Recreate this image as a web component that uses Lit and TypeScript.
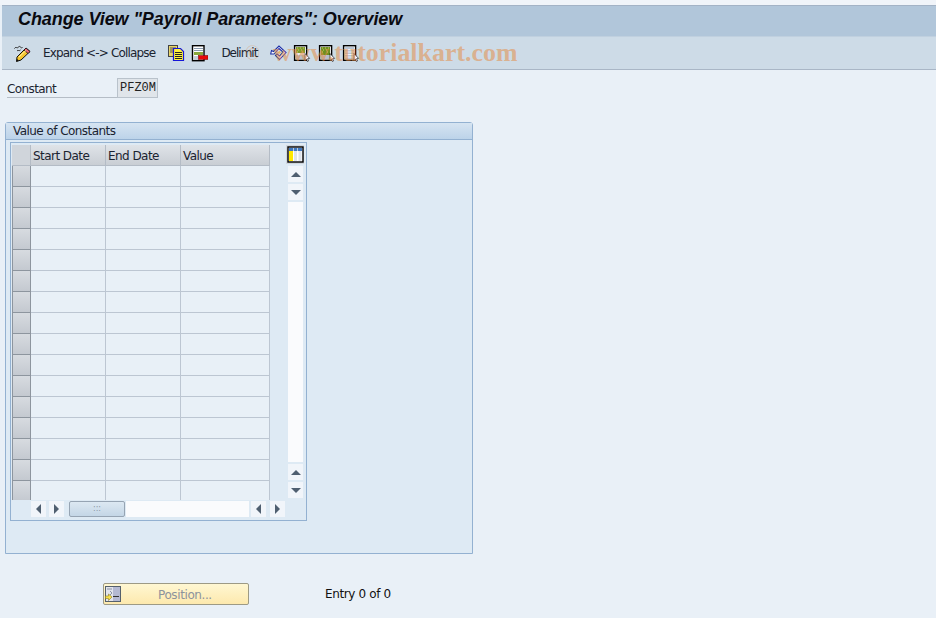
import { LitElement, html, css, svg } from "lit";
import { customElement } from "lit/decorators.js";

const rows = Array.from({ length: 16 }, (_, i) => i);

const pencil = svg`<svg width="17" height="17" viewBox="0 0 17 17"><path d="M0.500 3.500 C2 1 3 4 4.500 2 S7 4 8.500 2.500 M3 6 C4 4.500 5 6.500 6.500 5" stroke="#222" fill="none" stroke-width="1"/><path d="M3 12 L12 3 L16 6.500 L7 15 L2.500 16.500 Z" fill="#f6c52e" stroke="#111"/><path d="M12 3 L16 6.500 L14 8.500 L10 5 Z" fill="#ec6a78" stroke="#111" stroke-width=".8"/><path d="M5 12 L12 5.500" stroke="#fff2a8"/><path d="M2.500 16.500 L3 14 L5 15.500 Z" fill="#111"/></svg>`;
const copyIc = svg`<svg width="17" height="17" viewBox="0 0 17 17"><rect x="0.500" y="0.500" width="9" height="11" fill="#e8d46a" stroke="#444"/><path d="M2 3h6M2 5h6M2 7h6" stroke="#555"/><path d="M5.500 3.500 h7 l3 3 v9 h-10 Z" fill="#fff23a" stroke="#1616d8" stroke-width="1.200"/><path d="M7 7.500h7M7 9.500h7M7 11.500h7M7 13.500h7" stroke="#222"/></svg>`;
const delim = svg`<svg width="17" height="17" viewBox="0 0 17 17"><rect x="1.500" y="0.700" width="11.500" height="15" fill="#fff" stroke="#000" stroke-width="1.400"/><path d="M3 3.500h9M3 5.500h9" stroke="#8a9bb0"/><rect x="3" y="7" width="9" height="3" fill="#8aa83c"/><path d="M3 12h5M3 14h5" stroke="#8a9bb0"/><rect x="7.500" y="10.500" width="9.500" height="4" fill="#e80808" stroke="#700" stroke-width=".5"/></svg>`;
const diamond = svg`<svg width="17" height="17" viewBox="0 0 17 17"><path d="M0.700 9 L4 9 L9 3.500 L13 7 L9.500 11 L7 9 L5.500 10.500 L9.500 14.500 L16 7.500 L9 1 L3.500 6.500 L1.500 5.500 Z" fill="#fff" stroke="#1c2ea8" stroke-width="1.100"/><path d="M7.500 7.500 L9.500 5.800 L11 7.200 L9.500 9 Z" fill="#e9b866"/></svg>`;
const sel = (a: string, b: string, lines: boolean) => svg`<svg width="18" height="17" viewBox="0 0 18 17"><rect x="1.600" y="0.700" width="12" height="14.600" fill="#fff" stroke="#000" stroke-width="1.400"/>${
  lines
    ? svg`<rect x="3" y="2" width="9" height="12" fill="#b9c6d6"/><path d="M3 4.500h9M3 7h9M3 9.500h9M3 12h9" stroke="#eef1f5"/>`
    : svg`<rect x="3" y="2" width="9" height="6" fill="${a}"/><rect x="3" y="8" width="9" height="2" fill="${b}"/><path d="M3 11h9M3 13h9" stroke="#6f8198"/><path d="M4 3h1M7 3h1M10 3h1M5 5h1M8 5h1M4 7h1M9 7h1" stroke="#c3cf70"/>`
}<path d="M12 8.500 L12 15.500 L13.400 14.300 L14.400 16.500 L15.500 16 L14.600 13.700 L16.600 13.400 Z" fill="#fff" stroke="#000" stroke-width=".6"/></svg>`;
const layout = svg`<svg width="18" height="17" viewBox="0 0 18 17"><rect x="2" y="1" width="15" height="15" fill="#fff" stroke="#000" stroke-width="1.400"/><rect x="3" y="2" width="13" height="3" fill="#3f78c0"/><path d="M7.500 2v3M11.500 2v3" stroke="#bcd"/><rect x="3" y="5" width="4" height="10" fill="#ffe800"/><rect x="8" y="5" width="3" height="10" fill="#dfe3ea"/><rect x="12.500" y="5" width="3" height="10" fill="#dfe3ea"/></svg>`;
const posIc = svg`<svg width="16" height="16" viewBox="0 0 16 16"><rect x=".5" y=".5" width="15" height="15" fill="#e2e4ec" stroke="#55606c"/><rect x="8" y="1" width="7" height="14" fill="#b4b9d2"/><path d="M8 10.500h6" stroke="#333"/><path d="M2 3h5M5 5l2 2-2 2" stroke="#8a94a4" fill="none"/><path d="M0.500 10h3V8l3.500 3-3.500 3.500V12.500H0.500Z" fill="#f7e04a" stroke="#8c7a20" stroke-width=".6"/></svg>`;

@customElement("app-root")
export class AppRoot extends LitElement {
  static styles = css`
    :host { display: block; width: 936px; height: 618px; overflow: hidden; background: #e9f0f7; font-family: "DejaVu Sans", "Noto Sans", sans-serif; font-size: 12px; color: #1c2430; }
    .page { display: flex; flex-direction: column; height: 618px; }
    .strip { height: 5px; background: #f0f4f9; flex: none; }
    .title { flex: none; height: 30px; margin-left: 2px; border-top: 1px solid #a3b3c6; background: #b1c6da; display: flex; align-items: flex-start; padding-left: 16px; border-bottom: 1px solid #c0d0df; }
    .title span { font: italic bold 18px/26px "Liberation Sans", Arial, sans-serif; letter-spacing: -0.08px; color: #0a0a10; }
    .toolbar { flex: none; height: 32px; margin-left: 2px; background: #cddbe7; border-bottom: 1px solid #a9b6c6; position: relative; display: flex; align-items: center; padding-left: 12px; }
    .toolbar svg { flex: none; display: block; }
    .tb-text { white-space: pre; font: 12px "DejaVu Sans", sans-serif; color: #1a2330; }
    .expand { margin-left: 12px; letter-spacing: -0.82px; }
    .delimit { margin-left: 13px; letter-spacing: -1px; }
    .i2 { margin-left: 13px; }
    .i3 { margin-left: 6px; }
    .i5 { margin-left: 13px; }
    .i6 { margin-left: 6px; }
    .i7 { margin-left: 7px; }
    .i8 { margin-left: 6px; }
    .wm { position: absolute; left: 271px; top: 0; font: bold 25.9px/32px "Liberation Serif", serif; color: rgba(228, 140, 70, .55); white-space: nowrap; pointer-events: none; }
    .copy { position: absolute; left: 243px; top: 0; font: 20px/32px "Liberation Serif", serif; color: rgba(228, 140, 70, .35); pointer-events: none; }
    .const { flex: none; height: 20px; margin: 8px 0 0 7px; display: flex; align-items: flex-start; }
    .const label { width: 110px; height: 19px; border-bottom: 1px solid #b5bdc6; font: 12px/22px "DejaVu Sans", sans-serif; letter-spacing: -0.6px; }
    .const .val { width: 39px; height: 18px; background: #e0e5ea; border: 1px solid #b9c2cb; font: 12px/19px "Liberation Mono", monospace; color: #222; padding-left: 1px; box-sizing: content-box; width: 38px; text-align: center; }
    .group { flex: none; margin: 24px 0 0 5px; width: 468px; height: 432px; box-sizing: border-box; border: 1px solid #93b1d1; border-radius: 3px 3px 0 0; background: #deeaf4; }
    .ghead { height: 16px; background: linear-gradient(#d6e4f1, #bcd3e9); border-bottom: 1px solid #93b1d1; padding-left: 7px; font: 12px/16px "DejaVu Sans", sans-serif; letter-spacing: -0.55px; color: #1a2330; }
    .tc { margin: 2px 0 0 4px; width: 297px; height: 379px; box-sizing: border-box; border: 1px solid #93b1d1; background: #deeaf4; padding: 2px 0 0 1px; display: grid; grid-template-columns: 276px 18px; grid-template-rows: 355px 20px; }
    .tbl { display: grid; grid-template-columns: 19px 75px 75px 89px; grid-template-rows: repeat(17, 21px); height: 355px; overflow: hidden; align-content: start; }
    .hcell { background: linear-gradient(#dfe3e8, #c9ced4); border-right: 1px solid #b4bcc6; border-bottom: 1px solid #b4bcc6; font: 12px/22px "DejaVu Sans", sans-serif; letter-spacing: -0.55px; padding-left: 2px; box-sizing: border-box; color: #1a2330; }
    .hcell.corner { padding: 0; background: #d0d5db; }
    .rs { background: linear-gradient(#d7dbe0, #c4c9d0); border: 1px solid #8d959e; border-width: 0 1px 1px 1px; box-sizing: border-box; }
    .cell { background: #e8f0f7; border-right: 1px solid #bcc6d2; border-bottom: 1px solid #bcc6d2; box-sizing: border-box; }
    .side { display: flex; flex-direction: column; align-items: flex-start; height: 353px; }
    .lay { width: 18px; height: 19px; margin-left: -2px; display: flex; align-items: center; justify-content: center; background: #cfd6dd; flex: none; }
    .sb { width: 15px; background: #fafbfd; flex: 1; }
    .btn { width: 15px; height: 16px; background: #f1f5fa; display: flex; align-items: center; justify-content: center; flex: none; margin-bottom: 2px; }
    .btn:last-child { margin-bottom: 0; }
    .mt { margin-top: 2px; }
    .up { width: 0; height: 0; border: 5px solid transparent; border-top: 0; border-bottom: 5px solid #4f5f70; }
    .dn { width: 0; height: 0; border: 5px solid transparent; border-bottom: 0; border-top: 5px solid #4f5f70; }
    .lf { width: 0; height: 0; border: 5px solid transparent; border-left: 0; border-right: 5px solid #4f5f70; }
    .rt { width: 0; height: 0; border: 5px solid transparent; border-right: 0; border-left: 5px solid #4f5f70; }
    .hs { grid-column: 1 / 2; display: flex; align-items: center; padding-left: 19px; gap: 2px; height: 16px; margin-top: 1px; }
    .hs .btn { margin: 0; }
    .hs .btn.gap { margin-left: 1px; }
    .hs .btn.gap2 { margin-left: 2px; }
    .hs .btn.nudge { margin-left: 1px; }
    .thumb { width: 56px; height: 16px; margin-left: 3px; box-sizing: border-box; border: 1px solid #96a4b3; border-radius: 2px; background: linear-gradient(#dce8f2, #c4d6e6); font: 8px/13px "DejaVu Sans", sans-serif; text-align: center; color: #8b97a3; }
    .track { width: 123px; height: 16px; background: #fafbfd; margin: 0 -1px; flex: none; }
    .bottom { flex: none; margin: 29px 0 0 103px; display: flex; align-items: flex-start; height: 22px; }
    .pos { width: 146px; height: 22px; box-sizing: border-box; border: 1px solid #9d9a85; border-radius: 2px; background: linear-gradient(#fff7d2, #fde9ae); display: flex; align-items: center; font: 12px/22px "DejaVu Sans", sans-serif; letter-spacing: -0.4px; color: #8d939c; }
    .pos svg { margin-left: 1px; display: block; }
    .pos span { margin-left: 37px; position: relative; top: 1px; }
    .entry { margin-left: 76px; font: 12px/23px "DejaVu Sans", sans-serif; letter-spacing: -0.37px; color: #111; }
  `;

  render() {
    return html`<div class="page">
      <div class="strip"></div>
      <div class="title"><span>Change View "Payroll Parameters": Overview</span></div>
      <div class="toolbar">
        ${pencil}
        <span class="tb-text expand">Expand &lt;-&gt; Collapse</span>
        <span class="i2">${copyIc}</span>
        <span class="i3">${delim}</span>
        <span class="tb-text delimit">Delimit</span>
        <span class="i5">${diamond}</span>
        <span class="i6">${sel("#7f9a2c", "#e8ecf0", false)}</span>
        <span class="i7">${sel("#6f8f20", "#6f8f20", false)}</span>
        <span class="i8">${sel("", "", true)}</span>
        <div class="copy">©</div>
        <div class="wm">www.tutorialkart.com</div>
      </div>
      <div class="const"><label>Constant</label><div class="val">PFZ0M</div></div>
      <div class="group">
        <div class="ghead">Value of Constants</div>
        <div class="tc">
          <div class="tbl">
            <div class="hcell corner"></div>
            <div class="hcell">Start Date</div>
            <div class="hcell">End Date</div>
            <div class="hcell">Value</div>
            ${rows.map(() => html`<div class="rs"></div><div class="cell"></div><div class="cell"></div><div class="cell"></div>`)}
          </div>
          <div class="side">
            <div class="lay">${layout}</div>
            <div class="btn mt"><div class="up"></div></div>
            <div class="btn"><div class="dn"></div></div>
            <div class="sb"></div>
            <div class="btn mt"><div class="up"></div></div>
            <div class="btn"><div class="dn"></div></div>
          </div>
          <div class="hs">
            <div class="btn"><div class="lf"></div></div>
            <div class="btn gap"><div class="rt"></div></div>
            <div class="thumb">:::</div>
            <div class="track"></div>
            <div class="btn nudge"><div class="lf"></div></div>
            <div class="btn gap2"><div class="rt"></div></div>
          </div>
        </div>
      </div>
      <div class="bottom">
        <div class="pos">${posIc}<span>Position...</span></div>
        <div class="entry">Entry 0 of 0</div>
      </div>
    </div>`;
  }
}
